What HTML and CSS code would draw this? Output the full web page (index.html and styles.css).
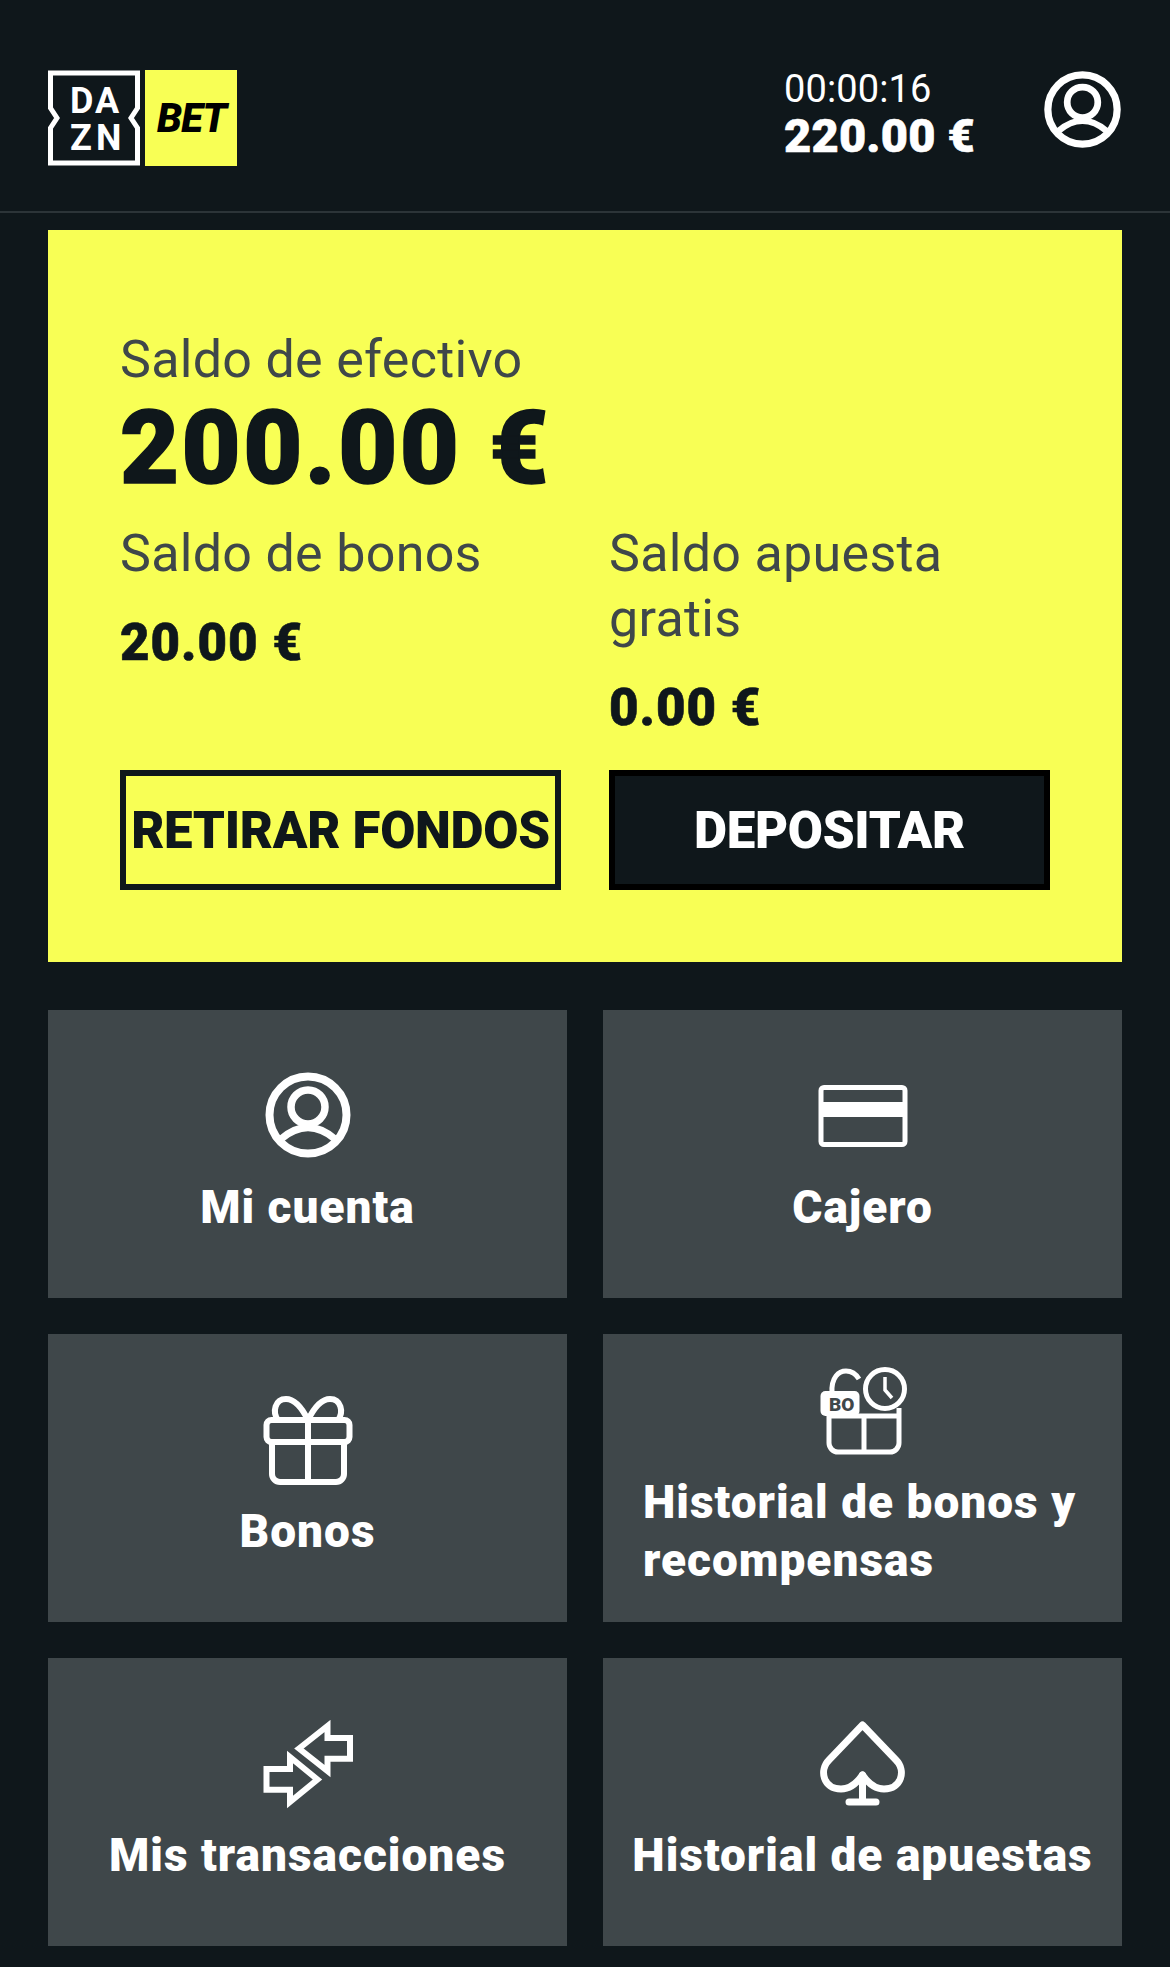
FILE: index.html
```html
<!DOCTYPE html>
<html lang="es">
<head>
  <meta charset="UTF-8" />
  <title>Mi cuenta - DAZN Bet</title>
  <meta name="viewport" content="width=device-width, initial-scale=1.0" />
  <link rel="stylesheet" href="styles.css">
</head>
<body>

<svg class="sprite" aria-hidden="true">
  <symbol id="icon-user" viewBox="0 0 90 90">
    <circle cx="45" cy="45" r="38.5" fill="none" stroke="#fff" stroke-width="8" />
    <circle cx="45" cy="37" r="17" fill="none" stroke="#fff" stroke-width="7.5" />
    <path d="M18 69 Q45 46 72 69" fill="none" stroke="#fff" stroke-width="7" />
  </symbol>
</svg>

<header class="topbar">
  <svg class="logo" width="189" height="96" viewBox="0 0 189 96">
    <path d="M2.5 3 H89.5 V38 L83 48 L89.5 58 V93 H2.5 V58 L9 48 L2.5 38 Z" fill="none" stroke="#fff" stroke-width="5" />
    <text class="logo-dazn" x="22" y="43">D</text>
    <text class="logo-dazn" x="47" y="43">A</text>
    <text class="logo-dazn" x="22" y="80">Z</text>
    <text class="logo-dazn" x="48" y="80">N</text>
    <rect x="97" width="92" height="96" fill="#f8ff55" />
    <text class="logo-bet" x="109" y="62" textLength="70">BET</text>
  </svg>
  <div class="session">
    <div class="session-time">00:00:16</div>
    <div class="session-total">220.00 €</div>
  </div>
  <svg class="user-icon" width="81" height="81"><use href="#icon-user" /></svg>
</header>

<main class="content">
  <section class="balance">
    <div class="balance-label">Saldo de efectivo</div>
    <div class="balance-main">200.00 €</div>
    <div class="balance-cols">
      <div>
        <div class="balance-label">Saldo de bonos</div>
        <div class="balance-sub">20.00 €</div>
      </div>
      <div>
        <div class="balance-label">Saldo apuesta gratis</div>
        <div class="balance-sub">0.00 €</div>
      </div>
      <a class="btn btn-outline">RETIRAR FONDOS</a>
      <a class="btn btn-dark">DEPOSITAR</a>
    </div>
  </section>

  <nav class="tiles">
    <a class="tile">
      <svg class="tile-icon tile-icon-up" width="90" height="90"><use href="#icon-user" /></svg>
      <span class="tile-label">Mi cuenta</span>
    </a>
    <a class="tile">
      <svg class="tile-icon tile-icon-up" width="90" height="90" viewBox="0 0 90 90">
        <rect x="3" y="17.5" width="84" height="57" rx="3" fill="none" stroke="#fff" stroke-width="5" />
        <rect x="3" y="32" width="84" height="15" fill="#fff" />
      </svg>
      <span class="tile-label">Cajero</span>
    </a>
    <a class="tile">
      <svg class="tile-icon" width="90" height="90" viewBox="0 0 90 90" fill="none" stroke="#fff" stroke-width="6">
        <rect x="3.5" y="24" width="83" height="22" rx="5" />
        <path d="M9 46 V78 a8 8 0 0 0 8 8 H73 a8 8 0 0 0 8 -8 V46" />
        <path d="M45 24 V86" />
        <path d="M45 24 C37 8 29 3 23 3 C12 3 9 16 15 24" />
        <path d="M45 24 C53 8 61 3 67 3 C78 3 81 16 75 24" />
      </svg>
      <span class="tile-label">Bonos</span>
    </a>
    <a class="tile">
      <svg class="tile-icon" width="90" height="90" viewBox="0 0 90 90" fill="none" stroke="#fff" stroke-width="5">
        <path d="M14 26 C13 10 21 4 28 4 C34 4 38 7 41 12" />
        <path d="M11 49 V76 a9 9 0 0 0 9 9 H72 a9 9 0 0 0 9 -9 V41 M11 49 H81 M46 49 V85" />
        <rect x="2.5" y="24" width="39" height="25" rx="5" fill="#fff" stroke="none" />
        <text class="bonus-text" x="11" y="44">BO</text>
        <circle cx="67" cy="22" r="19.5" />
        <path d="M67 10 V23 L74 31" stroke-width="3.5" />
      </svg>
      <span class="tile-label tile-label-wrap">Historial de bonos y recompensas</span>
    </a>
    <a class="tile">
      <svg class="tile-icon" width="90" height="90" viewBox="0 0 90 90" fill="none" stroke="#fff" stroke-width="6">
        <path d="M36 28.5 L64.5 6 V18 H87 V38.7 H64.5 V51 Z" />
        <path d="M54.5 59.5 L27 37 V49 H3.5 V69.7 H27 V82 Z" />
      </svg>
      <span class="tile-label">Mis transacciones</span>
    </a>
    <a class="tile">
      <svg class="tile-icon" width="90" height="90" viewBox="0 0 90 90" fill="none" stroke="#fff" stroke-width="7" stroke-linejoin="round" stroke-linecap="round">
        <path d="M44.5 5 L78 40 C88 50 84 69 66 69 C56 69 50 63 44.5 55 C39 63 33 69 23 69 C5 69 1 50 11 40 Z" />
        <path d="M44.5 55 V82 M31 82 H58" />
      </svg>
      <span class="tile-label">Historial de apuestas</span>
    </a>
  </nav>
</main>

</body>
</html>
```

FILE: styles.css
```css
* {
  box-sizing: border-box;
}
body {
  margin: 0;
  background: #0f171b;
  color: #fff;
  font-family: Roboto, "Liberation Sans", sans-serif;
}
.sprite {
  display: none;
}
.topbar {
  display: flex;
  align-items: center;
  height: 213px;
  padding: 20px 47px 0 48px;
  border-bottom: 2px solid #2c3438;
}
.logo {
  display: block;
  margin-top: 5px;
}
.logo-dazn {
  font-size: 36px;
  font-weight: 700;
  fill: #fff;
}
.logo-bet {
  font-size: 40px;
  font-weight: 900;
  font-style: italic;
  fill: #000;
}
.session {
  margin-left: auto;
  margin-right: 67px;
  margin-top: -4px;
}
.session-time {
  font-size: 38px;
  font-weight: 400;
  line-height: 44px;
  letter-spacing: 0.1px;
}
.session-total {
  font-size: 47px;
  font-weight: 900;
  line-height: 50px;
  letter-spacing: 0.2px;
  -webkit-text-stroke: 0.6px #fff;
}
.user-icon {
  display: block;
  margin-top: -12px;
}
.content {
  padding: 17px 48px 21px;
}
.balance {
  padding: 97px 72px 72px;
  background: #f8ff55;
  color: #0f171b;
}
.balance-label {
  font-size: 52px;
  line-height: 65px;
  letter-spacing: 0.3px;
  color: #3f474a;
}
.balance-main {
  font-size: 102px;
  font-weight: 900;
  line-height: 112px;
  letter-spacing: 2.5px;
  margin-bottom: 17px;
  -webkit-text-stroke: 1.5px #0f171b;
}
.balance-cols {
  display: grid;
  grid-template-columns: 441px 441px;
  column-gap: 48px;
}
.balance-sub {
  font-size: 51px;
  font-weight: 900;
  line-height: 65px;
  letter-spacing: 1px;
  margin-top: 24px;
  margin-bottom: 30px;
  -webkit-text-stroke: 0.6px #0f171b;
}
.btn {
  display: flex;
  align-items: center;
  justify-content: center;
  height: 120px;
  border: 6px solid #0f171b;
  font-size: 51px;
  font-weight: 900;
  letter-spacing: -0.3px;
  white-space: nowrap;
}
.btn-dark {
  background: #0f171b;
  color: #fff;
  border-color: #000;
}
.tiles {
  display: grid;
  grid-template-columns: repeat(2, minmax(0, 1fr));
  gap: 36px;
  margin-top: 48px;
}
.tile {
  display: flex;
  flex-direction: column;
  align-items: center;
  justify-content: center;
  height: 288px;
  padding: 0 40px;
  background: #3f474a;
}
.tile-icon {
  display: block;
  flex: none;
  margin-bottom: 16px;
}
.tile-icon-up {
  margin-top: -2px;
  margin-bottom: 18px;
}
.tile-label {
  font-size: 46px;
  font-weight: 900;
  line-height: 58px;
  letter-spacing: 1px;
  white-space: nowrap;
}
.tile-label-wrap {
  align-self: stretch;
  white-space: normal;
}
.bonus-text {
  font-size: 19px;
  font-weight: 900;
  fill: #3f474a;
  stroke: none;
}
```
